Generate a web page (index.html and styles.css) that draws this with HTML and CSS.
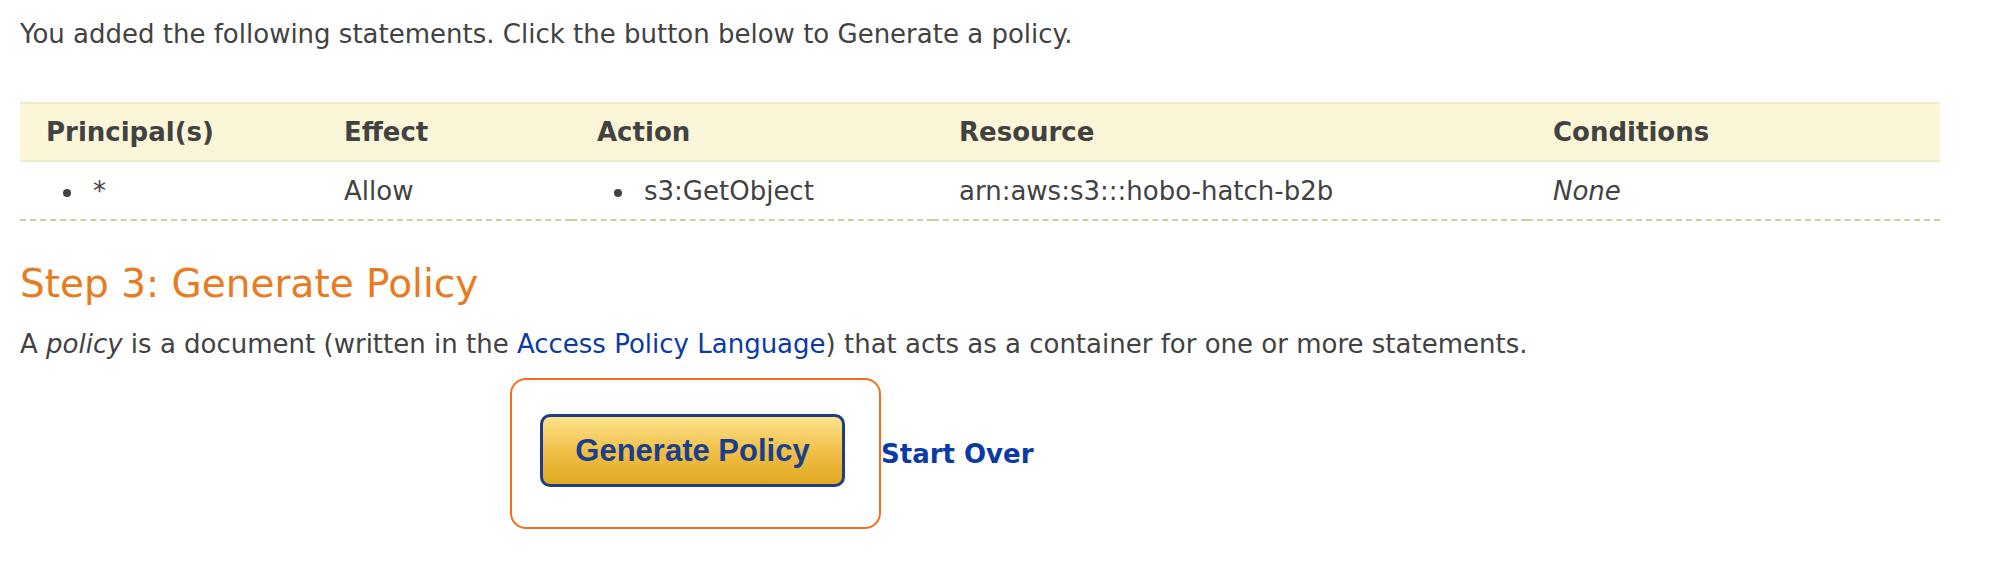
FILE: index.html
```html
<!DOCTYPE html>
<html>
<head>
<meta charset="utf-8">
<link rel="stylesheet" href="styles.css">
</head>
<body>
<div class="page">
  <p class="intro">You added the following statements. Click the button below to Generate a policy.</p>
  <table class="stmts">
    <colgroup>
      <col class="c1"><col class="c2"><col class="c3"><col class="c4"><col class="c5">
    </colgroup>
    <thead>
      <tr><th>Principal(s)</th><th>Effect</th><th>Action</th><th>Resource</th><th>Conditions</th></tr>
    </thead>
    <tbody>
      <tr>
        <td><ul class="blist"><li>*</li></ul></td>
        <td>Allow</td>
        <td><ul class="blist"><li>s3:GetObject</li></ul></td>
        <td>arn:aws:s3:::hobo-hatch-b2b</td>
        <td><em>None</em></td>
      </tr>
    </tbody>
  </table>
  <h2 class="step">Step 3: Generate Policy</h2>
  <p class="desc">A <em>policy</em> is a document (written in the <a href="#">Access Policy Language</a>) that acts as a container for one or more statements.</p>
  <div class="actions">
    <div class="focusbox">
      <button class="gen">Generate Policy</button>
    </div>
    <a class="restart" href="#">Start Over</a>
  </div>
</div>
</body>
</html>
```

FILE: styles.css
```css
html, body {
  margin: 0;
  padding: 0;
  background: #ffffff;
}
.page {
  padding: 0 20px;
  font-family: "DejaVu Sans", Verdana, sans-serif;
  font-size: 26px;
  color: #424242;
}
.intro {
  margin: 0;
  padding-top: 18px;
  line-height: 32px;
}
.stmts {
  margin-top: 52px;
  width: 1920px;
  border-collapse: collapse;
  table-layout: fixed;
}
.c1 { width: 298px; }
.c2 { width: 253px; }
.c3 { width: 362px; }
.c4 { width: 594px; }
.c5 { width: 413px; }
.stmts th {
  background: #faf6d7;
  border-top: 2px solid #ecebcc;
  border-bottom: 2px solid #ecebcc;
  text-align: left;
  font-weight: bold;
  height: 56px;
  padding: 0 0 0 26px;
  line-height: 30px;
  vertical-align: middle;
}
.stmts td {
  height: 57px;
  padding: 0 0 0 26px;
  line-height: 30px;
  vertical-align: middle;
  border-bottom: 2px dashed #cfcf9c;
}
.blist {
  margin: 0;
  padding: 0 0 0 47px;
  list-style: none;
}
.blist li {
  position: relative;
}
.blist li::before {
  content: "";
  position: absolute;
  left: -30px;
  top: 13px;
  width: 8px;
  height: 8px;
  border-radius: 50%;
  background: #424242;
}
.step {
  margin: 40px 0 0 0;
  font-size: 39px;
  font-weight: normal;
  color: #e87b22;
  line-height: 46px;
}
.desc {
  margin: 21px 0 0 0;
  line-height: 32px;
}
.desc a {
  color: #0b3aa6;
  text-decoration: none;
}
.actions {
  display: flex;
  align-items: center;
  margin-top: 18px;
  margin-left: 490px;
}
.focusbox {
  width: 367px;
  height: 147px;
  border: 2.5px solid #f66c1a;
  border-radius: 16px;
  display: flex;
  align-items: flex-start;
}
.gen {
  margin: 34px 0 0 28px;
  width: 305px;
  height: 73px;
  border: 3px solid #1e3d86;
  border-radius: 10px;
  background: linear-gradient(to bottom, #fde28d 0%, #f0c04a 50%, #e0a820 100%);
  font-family: "Liberation Sans", Arial, sans-serif;
  font-weight: bold;
  font-size: 31px;
  color: #1c3f8c;
  padding: 0;
}
.restart {
  font-weight: bold;
  font-size: 26px;
  color: #0a3aa8;
  text-decoration: none;
}
```
